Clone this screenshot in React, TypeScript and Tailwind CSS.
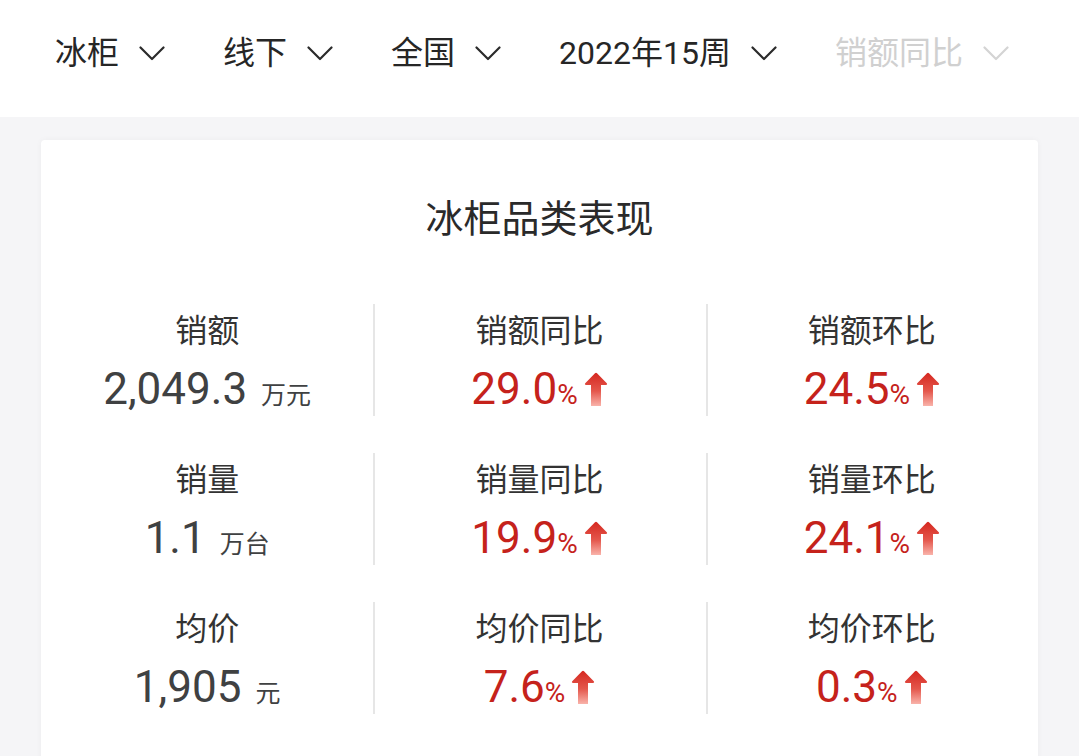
import { ReactNode } from "react";

const filters = [
	{ label: "冰柜", active: true },
	{ label: "线下", active: true },
	{ label: "全国", active: true },
	{ label: "2022年15周", active: true },
	{ label: "销额同比", active: false },
];

type Cell = {
	label: string;
	value: string;
	unit: string;
	trend?: boolean;
};

const rows: Cell[][] = [
	[
		{ label: "销额", value: "2,049.3", unit: "万元" },
		{ label: "销额同比", value: "29.0", unit: "%", trend: true },
		{ label: "销额环比", value: "24.5", unit: "%", trend: true },
	],
	[
		{ label: "销量", value: "1.1", unit: "万台" },
		{ label: "销量同比", value: "19.9", unit: "%", trend: true },
		{ label: "销量环比", value: "24.1", unit: "%", trend: true },
	],
	[
		{ label: "均价", value: "1,905", unit: "元" },
		{ label: "均价同比", value: "7.6", unit: "%", trend: true },
		{ label: "均价环比", value: "0.3", unit: "%", trend: true },
	],
];

const Chevron = ({ color }: { color: string }) => (
	<svg width="26" height="15" viewBox="0 0 26 15" fill="none">
		<polyline
			points="1.5,1.5 13,13 24.5,1.5"
			stroke={color}
			strokeWidth="2.2"
			strokeLinecap="round"
			strokeLinejoin="round"
		/>
	</svg>
);

const UpArrow = () => (
	<svg width="24" height="34" viewBox="0 0 24 34">
		<defs>
			<linearGradient id="up-grad" x1="0" y1="0" x2="0" y2="1">
				<stop offset="0%" stopColor="#d5271f" />
				<stop offset="55%" stopColor="#e4574c" />
				<stop offset="100%" stopColor="#f9b3aa" />
			</linearGradient>
		</defs>
		<path
			d="M11 1.2 Q12 0.2 13 1.2 L23 11.6 Q23.6 13 22 13 L17 13 L17 34 L7 34 L7 13 L2 13 Q0.4 13 1 11.6 Z"
			fill="url(#up-grad)"
		/>
	</svg>
);

const Metric = ({ cell, divider }: { cell: Cell; divider: ReactNode }) => (
	<div className="relative flex h-[112px] flex-col items-center">
		{divider}
		<div className="text-[32px] leading-[48px] text-[#333333]">{cell.label}</div>
		<div className="mt-[9px] flex items-baseline leading-[56px]">
			{cell.trend ? (
				<>
					<span className="font-['Roboto'] text-[44px] text-[#c5221b]">{cell.value}</span>
					<span className="font-['Roboto'] text-[28px] text-[#c5221b]">{cell.unit}</span>
					<span className="ml-[6px] -translate-y-[3px] self-center">
						<UpArrow />
					</span>
				</>
			) : (
				<>
					<span className="font-['Roboto'] text-[44px] text-[#3f4142]">{cell.value}</span>
					<span className="ml-[14px] text-[25px] text-[#3f4142]">{cell.unit}</span>
				</>
			)}
		</div>
	</div>
);

const App = () => {
	return (
		<div className="min-h-[756px] w-[1079px] overflow-hidden bg-[#f5f5f7] font-['Noto_Sans_CJK_SC','Noto_Sans',sans-serif]">
			<header className="flex h-[117px] items-start gap-[58px] bg-white pl-[55px] pt-[29px]">
				{filters.map(f => (
					<div key={f.label} className="flex items-center gap-[20px]">
						<span
							className={`font-['Roboto','Noto_Sans_CJK_SC',sans-serif] text-[32px] leading-[48px] ${
								f.active ? "text-[#262626]" : "text-[#d0d0d0]"
							}`}
						>
							{f.label}
						</span>
						<Chevron color={f.active ? "#2b2b2b" : "#d4d4d4"} />
					</div>
				))}
			</header>
			<div className="px-[41px] pt-[23px]">
				<section className="h-[640px] rounded-[4px] bg-white pt-[47px] shadow-[0_0_6px_rgba(0,0,0,0.04)]">
					<h2 className="text-center text-[38px] leading-[57px] text-[#2a2a2a]">
						冰柜品类表现
					</h2>
					<div className="mt-[60px] flex flex-col gap-[37px]">
						{rows.map((row, i) => (
							<div key={i} className="grid grid-cols-3">
								{row.map((cell, j) => (
									<Metric
										key={cell.label}
										cell={cell}
										divider={
											j > 0 ? (
												<div className="absolute left-0 top-0 h-full w-[2px] bg-[#e6e6e6]"></div>
											) : null
										}
									/>
								))}
							</div>
						))}
					</div>
				</section>
			</div>
		</div>
	);
};

export default App;
